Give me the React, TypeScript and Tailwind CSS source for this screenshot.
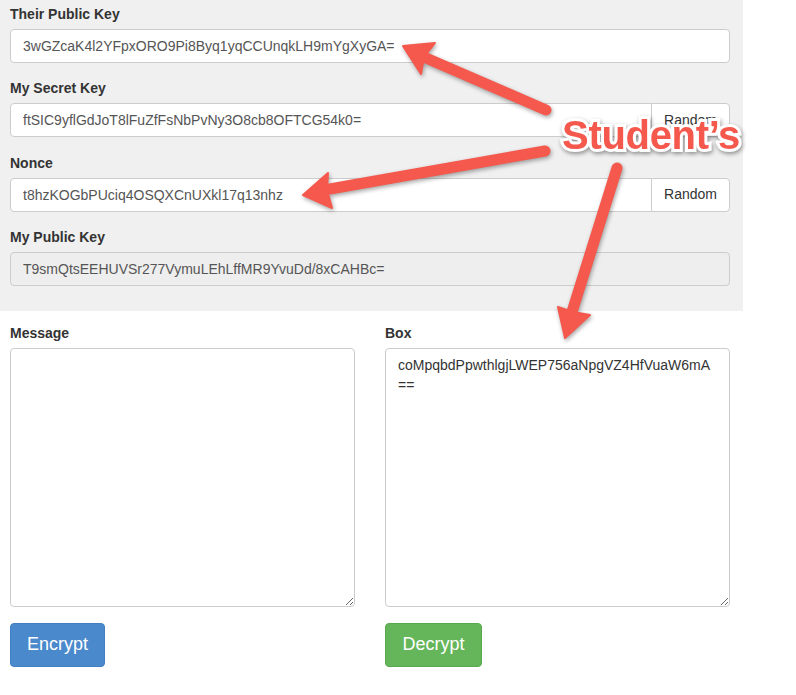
import React from 'react';

const FONT = { fontFamily: '"Liberation Sans", Arial, Helvetica, sans-serif' };

function Label({ children }: { children: React.ReactNode }) {
  return <label className="block mb-[5px] text-[14px] leading-[20px] font-bold text-[#333]">{children}</label>;
}

function KeyField({ label, value, random, readOnly }: { label: string; value: string; random?: boolean; readOnly?: boolean }) {
  return (
    <div className="mb-[15px]">
      <Label>{label}</Label>
      <div className="flex">
        <input
          readOnly
          value={value}
          className={`h-[34px] flex-1 min-w-0 px-[12px] text-[14px] text-[#555] border border-[#ccc] outline-none ${
            random ? 'rounded-l-[4px]' : 'rounded-[4px]'
          } ${readOnly ? 'bg-[#eee]' : 'bg-white'}`}
          style={FONT}
        />
        {random && (
          <button className="h-[34px] w-[79px] -ml-px border border-[#ccc] rounded-r-[4px] bg-white text-[14px] text-[#333]">
            Random
          </button>
        )}
      </div>
    </div>
  );
}

function Arrow({ tail, end, head }: { tail: [number, number]; end: [number, number]; head: [number, number][] }) {
  return (
    <g>
      <line x1={tail[0]} y1={tail[1]} x2={end[0]} y2={end[1]} stroke="#f5584c" strokeWidth="11" strokeLinecap="round" />
      <polygon points={head.map((p) => p.join(',')).join(' ')} fill="#f5584c" strokeLinejoin="round" stroke="#f5584c" strokeWidth="2" />
    </g>
  );
}

export default function App() {
  return (
    <div className="relative w-[796px] h-[695px] bg-white overflow-hidden" style={FONT}>
      {/* keys panel */}
      <div className="w-[743px] bg-[#f0f0f0] pl-[10px] pr-[13px] pt-[4px] pb-[10px] flex flex-col gap-[0.3px]">
        <KeyField label="Their Public Key" value="3wGZcaK4l2YFpxORO9Pi8Byq1yqCCUnqkLH9mYgXyGA=" />
        <KeyField label="My Secret Key" value="ftSIC9yflGdJoT8lFuZfFsNbPvNy3O8cb8OFTCG54k0=" random />
        <KeyField label="Nonce" value="t8hzKOGbPUciq4OSQXCnUXkl17q13nhz" random />
        <KeyField label="My Public Key" value="T9smQtsEEHUVSr277VymuLEhLffMR9YvuDd/8xCAHBc=" readOnly />
      </div>

      {/* message / box */}
      <div className="w-[720px] ml-[10px] mt-[12px] grid grid-cols-2 gap-[30px]">
        <div>
          <Label>Message</Label>
          <textarea
            className="block w-full h-[259px] px-[12px] py-[6px] text-[14px] leading-[20px] text-[#555] border border-[#ccc] rounded-[4px] outline-none"
            style={FONT}
          />
          <button className="mt-[16px] h-[44px] px-[16px] text-[18px] text-white bg-[#4a89cc] border border-[#3f7fc2] rounded-[4px]">
            Encrypt
          </button>
        </div>
        <div>
          <Label>Box</Label>
          <textarea
            readOnly
            value={'coMpqbdPpwthlgjLWEP756aNpgVZ4HfVuaW6mA\n=='}
            className="block w-full h-[259px] px-[12px] py-[6px] text-[14px] leading-[20px] text-[#333] border border-[#ccc] rounded-[4px] outline-none"
            style={FONT}
          />
          <button className="mt-[16px] h-[44px] w-[97px] px-[16px] text-[18px] text-white bg-[#65b65a] border border-[#58a84e] rounded-[4px]">
            Decrypt
          </button>
        </div>
      </div>

      {/* annotation overlay */}
      <svg
        className="absolute inset-0 pointer-events-none [filter:drop-shadow(1px_2px_2px_rgba(0,0,0,0.35))]"
        width="796"
        height="695"
      >
        <Arrow tail={[546, 110]} end={[426, 58]} head={[[403, 46], [435, 43], [424, 57], [421, 74]]} />
        <Arrow tail={[545, 151]} end={[330, 189]} head={[[303, 195], [328, 173], [327, 190], [332, 208]]} />
        <Arrow tail={[617, 168]} end={[572, 312]} head={[[565, 338], [558, 307], [573, 312], [590, 315]]} />
      </svg>
      <div
        className="absolute left-[562px] top-[115px] text-[40px] leading-[40px] font-bold text-[#f5584c] tracking-[-0.3px] [paint-order:stroke_fill] [-webkit-text-stroke:6px_white] [filter:drop-shadow(1px_2px_2px_rgba(0,0,0,0.4))]"
      >
        Student’s
      </div>
    </div>
  );
}
